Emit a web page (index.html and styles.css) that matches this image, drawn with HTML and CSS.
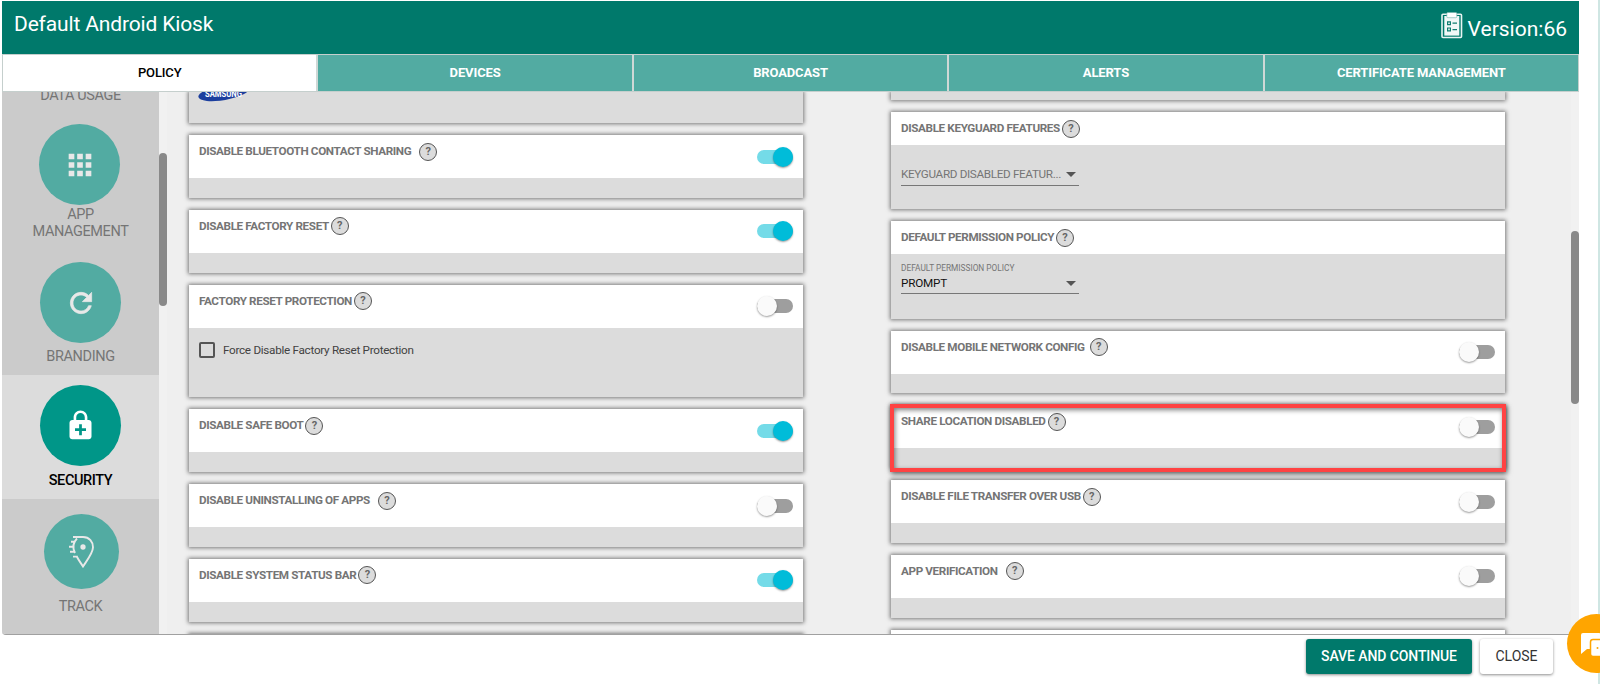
FILE: index.html
```html
<!DOCTYPE html>
<html lang="en">
<head>
<meta charset="utf-8">
<title>Default Android Kiosk</title>
<link rel="stylesheet" href="styles.css">
</head>
<body>
<div class="dialog">
  <header class="header">
    <h1 class="title">Default Android Kiosk</h1>
    <div class="version">
      <svg class="clip" viewBox="0 0 22 27" width="22" height="27">
        <rect x="1" y="2.2" width="19.5" height="23.3" rx="1" fill="#00796b" stroke="#e8f4f2" stroke-width="1.6"/>
        <rect x="3.3" y="4" width="15" height="19.6" fill="#f1f8f7"/>
        <rect x="5.8" y="0.5" width="10" height="5.2" rx="1" fill="#fff" stroke="#6fb0a8" stroke-width=".6"/>
        <path d="M6.6 9.8h2.8v2.8H6.6zM6.6 16h2.8v2.8H6.6zM11.5 11.2h4.5M11.500 17.600h4.500" fill="none" stroke="#0f7d70" stroke-width="1.2"/>
      </svg>
      <span>Version:66</span>
    </div>
  </header>
  <nav class="tabs">
    <div class="tab active">POLICY</div><div class="tab">DEVICES</div><div class="tab">BROADCAST</div><div class="tab">ALERTS</div><div class="tab">CERTIFICATE MANAGEMENT</div>
  </nav>
  <main class="body">
    <aside class="side">
      <div class="item first">DATA USAGE</div>
      <div class="item app">
        <div class="disc"><svg viewBox="0 0 24 24" width="34" height="34"><path fill="#e8e8e8" d="M4 8h4V4H4zm6 12h4v-4h-4zm-6 0h4v-4H4zm0-6h4v-4H4zm6 0h4v-4h-4zm6-10v4h4V4zm-6 4h4V4h-4zm6 6h4v-4h-4zm0 6h4v-4h-4z"/></svg></div>
        <div>APP<br>MANAGEMENT</div>
      </div>
      <div class="item brand">
        <div class="disc"><svg viewBox="0 0 24 24" width="32" height="32"><path fill="#e8e8e8" d="M17.650 6.350C16.200 4.900 14.210 4 12 4c-4.420 0-7.990 3.580-7.990 8s3.570 8 7.990 8c3.730 0 6.840-2.550 7.730-6h-2.080c-.82 2.330-3.040 4-5.650 4-3.310 0-6-2.690-6-6s2.690-6 6-6c1.660 0 3.140.69 4.220 1.780L13 11h7V4l-2.350 2.350z" stroke="#e8e8e8" stroke-width=".5"/></svg></div>
        <div>BRANDING</div>
      </div>
      <div class="item secure">
        <div class="disc"><svg viewBox="0 0 24 24" width="33" height="33"><path fill="#fff" fill-rule="evenodd" d="M18 8h-1V6c0-2.760-2.240-5-5-5S7 3.240 7 6v2H6c-1.100 0-2 .9-2 2v10c0 1.100.9 2 2 2h12c1.100 0 2-.9 2-2V10c0-1.100-.9-2-2-2zM8.900 6c0-1.710 1.390-3.100 3.100-3.100s3.100 1.390 3.100 3.100v2H8.900V6zM16 16h-3v3h-2v-3H8v-2h3v-3h2v3h3z"/></svg></div>
        <div>SECURITY</div>
      </div>
      <div class="item track">
        <div class="disc"><svg viewBox="0 0 28 34" width="28" height="34" fill="none" stroke="#e8e8e8" stroke-width="1.900"><path d="M5 2h10c6.500 0 10 5 10 10.200C25 18 18.500 26 15 31.500 12.500 27.500 10.500 25 8.500 21M3 6.800h4.500M1 11.800h4.500M2 16.800h4.500M5 21.600h4M9 3.500C5 7.500 4.500 13 7 18"/><circle cx="15" cy="12" r="1.700" fill="#e8e8e8"/></svg></div>
        <div>TRACK</div>
      </div>
    </aside>
    <div class="track-left"><div class="thumb-left"></div></div>
    <section class="col left">
      <div class="card samsung"><svg width="52" height="26" viewBox="0 0 52 26"><ellipse cx="26" cy="12.500" rx="26" ry="7.500" transform="rotate(-10 26 12.500)" fill="#1c3f9e"/><text x="7" y="16.500" class="logo" textLength="37" lengthAdjust="spacingAndGlyphs">SAMSUNG</text></svg></div>
      <div class="card"><div class="head"><span class="name">DISABLE BLUETOOTH CONTACT SHARING</span><i class="help wide">?</i><b class="toggle on"></b></div></div>
      <div class="card"><div class="head"><span class="name">DISABLE FACTORY RESET</span><i class="help">?</i><b class="toggle on"></b></div></div>
      <div class="card frp"><div class="head"><span class="name">FACTORY RESET PROTECTION</span><i class="help">?</i><b class="toggle"></b></div>
        <div class="check"><span class="box"></span>Force Disable Factory Reset Protection</div></div>
      <div class="card"><div class="head"><span class="name">DISABLE SAFE BOOT</span><i class="help">?</i><b class="toggle on"></b></div></div>
      <div class="card"><div class="head"><span class="name">DISABLE UNINSTALLING OF APPS</span><i class="help wide">?</i><b class="toggle"></b></div></div>
      <div class="card"><div class="head"><span class="name">DISABLE SYSTEM STATUS BAR</span><i class="help">?</i><b class="toggle on"></b></div></div>
      <div class="card"><div class="head"></div></div>
    </section>
    <section class="col right">
      <div class="card stub"></div>
      <div class="card select"><div class="head short"><span class="name">DISABLE KEYGUARD FEATURES</span><i class="help">?</i></div>
        <div class="field keyguard"><span>KEYGUARD DISABLED FEATUR...</span><em class="caret"></em></div></div>
      <div class="card select"><div class="head short"><span class="name">DEFAULT PERMISSION POLICY</span><i class="help">?</i></div>
        <div class="label">DEFAULT PERMISSION POLICY</div>
        <div class="field prompt"><span>PROMPT</span><em class="caret"></em></div></div>
      <div class="card"><div class="head"><span class="name">DISABLE MOBILE NETWORK CONFIG</span><i class="help mid">?</i><b class="toggle"></b></div></div>
      <div class="card marked"><div class="head"><span class="name">SHARE LOCATION DISABLED</span><i class="help">?</i><b class="toggle"></b></div><div class="outline"></div></div>
      <div class="card"><div class="head"><span class="name">DISABLE FILE TRANSFER OVER USB</span><i class="help">?</i><b class="toggle"></b></div></div>
      <div class="card"><div class="head"><span class="name">APP VERIFICATION</span><i class="help wide">?</i><b class="toggle"></b></div></div>
      <div class="card"><div class="head"></div></div>
    </section>
    <div class="track-right"><div class="thumb-right"></div></div>
  </main>
  <footer class="footer">
    <button class="btn save">SAVE AND CONTINUE</button>
    <button class="btn close">CLOSE</button>
  </footer>
</div>
<div class="edge"></div>
<div class="chat"><svg width="34" height="30" viewBox="0 0 34 30"><path d="M2 0h16a2 2 0 0 1 2 2v12a2 2 0 0 1-2 2H6l-6 5V2a2 2 0 0 1 2-2z" fill="#fff"/><rect x="9.500" y="6.500" width="24" height="17" rx="2.500" fill="#fff" stroke="#ffa500" stroke-width="1.500"/><circle cx="16.500" cy="15" r="1" fill="#ffa500"/></svg></div>
</body>
</html>
```
FILE: styles.css
```css
* { box-sizing: border-box; }
body { margin: 0; width: 1600px; height: 684px; overflow: hidden; position: relative; background: #fff; font-family: Roboto, sans-serif; }
.dialog { width: 1577px; margin: 1px 0 0 2px; }
.header { height: 53px; background: #00796b; display: flex; justify-content: space-between; padding: 0 12px; color: #fff; }
.title { margin: 0; font-size: 21px; font-weight: 400; line-height: 47px; letter-spacing: -.15px; }
.version { display: flex; gap: 5px; font-size: 21px; line-height: 57px; }
.clip { margin-top: 11px; }
.tabs { height: 38px; display: flex; border: 1px solid #c5cfcd; font-size: 13px; font-weight: 700; line-height: 35px; text-align: center; letter-spacing: -.13px; }
.tab { flex: 1 1 0; background: #52aba2; color: #fff; border-left: 2px solid #cfd8d6; }
.tab.active { background: #fff; color: #000; border-left: 0; font-weight: 500; }
.body { height: 543px; overflow: hidden; display: flex; background: #efefef; border-bottom: 1px solid #a0a0a0; border-radius: 0 0 4px 4px; }
.side { width: 157px; background: #cbcbcb; font-size: 14.5px; letter-spacing: -.4px; line-height: 17px; color: #757575; text-align: center; font-weight: 400; flex: none; }
.item { display: flex; flex-direction: column; align-items: center; }
.first { height: 32px; padding-top: 0; margin-top: -5px; }
.disc { width: 81px; height: 81px; border-radius: 50%; background: #52aba2; display: flex; align-items: center; justify-content: center; flex: none; }
.app { height: 136px; padding-top: 5px; }
.app .disc { margin: 0 2px 1px 0; }
.brand { height: 120px; padding-top: 7px; }
.brand .disc { margin-bottom: 5px; }
.secure { height: 124px; background: #dcdcdc; color: #000; font-weight: 500; padding-top: 10px; }
.secure .disc { margin-bottom: 6px; background: #009688; }
.track { padding-top: 15px; }
.track .disc { width: 75px; height: 75px; margin: 0 0 9px 2px; }
.track-left { width: 8px; background: #f1f1f1; padding-top: 61px; flex: none; }
.thumb-left { height: 153px; background: #898989; border-radius: 4px; }
.track-right { width: 8px; margin-left: auto; background: #f1f1f1; padding-top: 139px; }
.thumb-right { height: 173px; background: #898989; border-radius: 4px; }
.col { width: 614px; flex: none; display: flex; flex-direction: column; gap: 12px; }
.left { margin-left: 22px; }
.right { margin-left: 88px; }
.card { height: 62.8px; flex: none; background: #dcdcdc; box-shadow: 0 0 4px 1px rgba(0,0,0,.5); }
.head { height: 43px; background: #fff; display: flex; padding: 7px 10px 0; }
.head.short { height: 33px; }
.name { font-size: 11.7px; letter-spacing: -.37px; line-height: 19px; font-weight: 700; color: #757575; white-space: nowrap; }
.help { width: 18px; height: 18px; margin: .5px 0 0 2px; border: 1px solid #555; border-radius: 50%; background: #dcdcdc; color: #666; font: 700 11px/16px Roboto, sans-serif; text-align: center; }
.help.mid { margin-left: 5px; }
.help.wide { margin-left: 8px; }
.toggle { width: 36px; height: 14px; border-radius: 7px; background: #9e9e9e; margin: 7.5px 0 0 auto; display: flex; align-items: center; }
.toggle::before { content: ""; width: 20px; height: 20px; border-radius: 50%; background: #fafafa; flex: none; box-shadow: 0 1px 2px rgba(0,0,0,.4); }
.toggle.on { background: #74dbe8; justify-content: flex-end; }
.toggle.on::before { background: #00bcd9; }
.samsung { height: 31px; padding-left: 9px; }
.samsung svg { display: block; margin-top: -12px; }
.logo { font: 700 9.5px Roboto, sans-serif; fill: #fff; }
.frp { height: 112.7px; }
.check { display: flex; gap: 8px; padding: 14px 10px; font-size: 11.7px; letter-spacing: -.28px; line-height: 16px; color: #424242; }
.box { width: 16px; height: 16px; border: 2px solid #555; border-radius: 2px; }
.stub { height: 8px; }
.select { height: 97.3px; }
.field { width: 178px; margin-left: 10px; height: 20px; border-bottom: 1px solid #777; display: flex; justify-content: space-between; font-size: 11.7px; letter-spacing: -.33px; line-height: 16px; color: #757575; white-space: nowrap; }
.keyguard { margin-top: 21px; }
.prompt { color: #111; height: 19px; letter-spacing: -.2px; }
.label { font-size: 8.3px; line-height: 10px; margin: 9px 0 2px 10px; color: #757575; }
.caret { border: 5px solid transparent; border-top-color: #555; border-bottom: 0; height: 0; margin: 6px 3px 0 0; }
.marked { position: relative; }
.outline { position: absolute; left: -1px; top: -1px; width: 616px; height: 68px; border: 4px solid #ff4343; box-shadow: 1px 2px 5px rgba(0,0,0,.6), inset 1px 2px 5px rgba(0,0,0,.5); }
.footer { display: flex; justify-content: flex-end; gap: 8px; padding: 4px 26px 0 0; }
.btn { height: 35px; border: 0; border-radius: 3px; font: 500 14px/35px Roboto, sans-serif; padding: 0; box-shadow: 0 1px 3px rgba(0,0,0,.45); }
.save { width: 166px; background: #00796b; color: #fff; letter-spacing: -.1px; }
.close { width: 73px; background: #fff; color: #333; font-weight: 400; }
.edge { position: absolute; right: 0; top: 0; width: 2px; height: 684px; background: #cfe6e3; }
.chat { position: absolute; left: 1567px; top: 614px; width: 59px; height: 59px; border-radius: 50%; background: #ffa500; padding: 19px 0 0 14px; }
```
